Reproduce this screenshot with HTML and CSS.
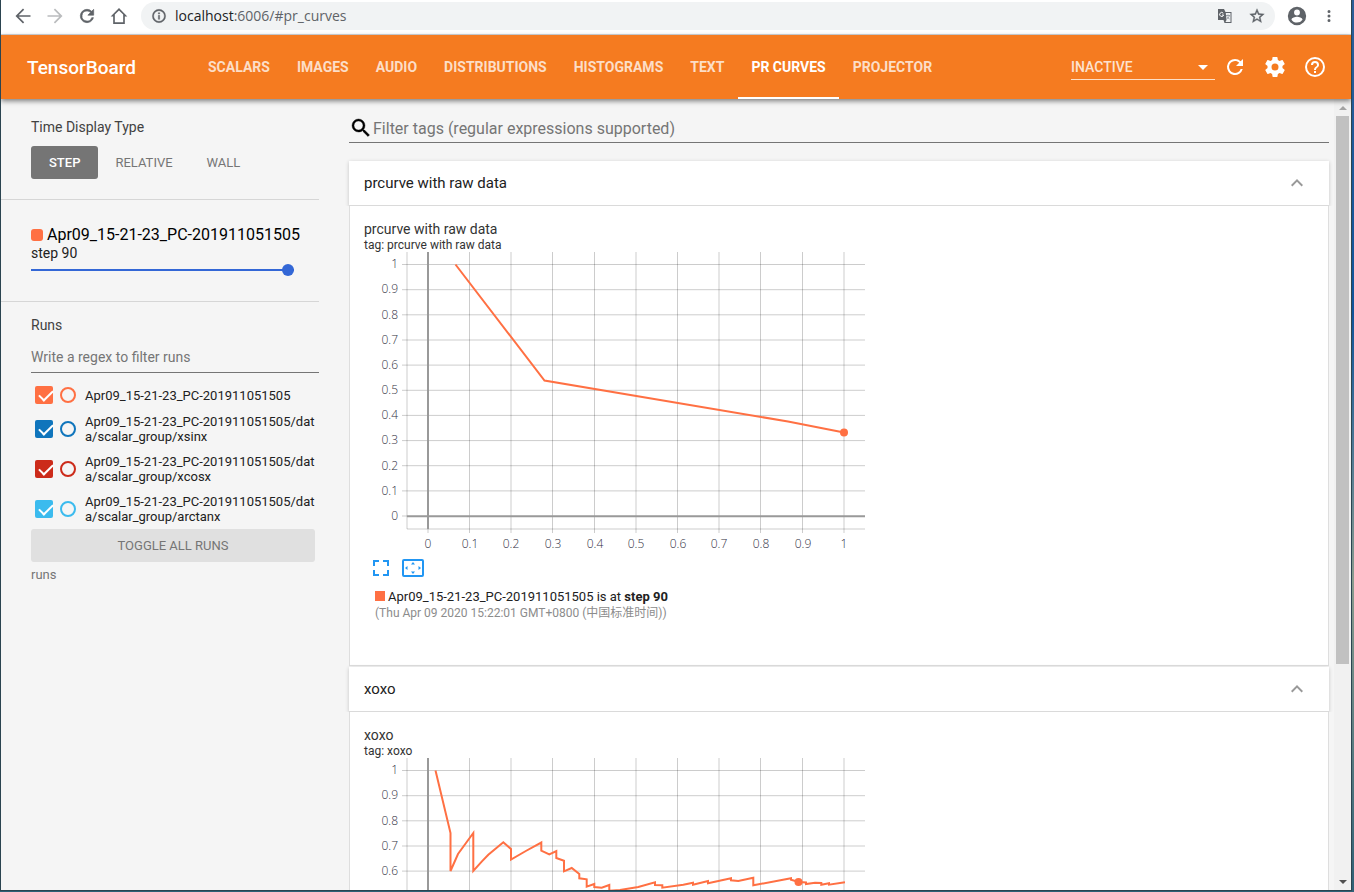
FILE: index.html
```html
<!DOCTYPE html>
<html lang="en">
<head>
<meta charset="utf-8">
<title>TensorBoard</title>
<link rel="stylesheet" href="styles.css">
</head>
<body>
<svg class="defs" aria-hidden="true">
  <symbol id="grid" viewBox="0 0 502 284">
    <path class="grid-line" d="M43 0V277M105.500 0V281M147 0V281M188.500 0V281M230.500 0V281M272 0V281M313.500 0V281M355 0V281M396.500 0V281M438.500 0V281M480 0V281"/>
    <path class="grid-line" d="M38 12.500H501M38 37.700H501M38 62.800H501M38 88H501M38 113.100H501M38 138.300H501M38 163.400H501M38 188.600H501M38 213.700H501M38 238.900H501M43 277H501M38 264H43M64 277V281"/>
    <path class="axis-line" d="M64 0V277M43 264.300H501"/>
  </symbol>
  <symbol id="chevron" viewBox="0 0 24 24"><path d="M12 8l-6 6 1.410 1.410L12 10.830l4.590 4.580L18 14z"/></symbol>
</svg>

<div class="browser-bar">
  <button class="browser-btn" aria-label="Back"><svg viewBox="0 0 24 24"><path d="M21 11H6.830l6.590-6.590L12 3l-9 9 9 9 1.410-1.410L6.830 13H21z"/></svg></button>
  <button class="browser-btn disabled" aria-label="Forward"><svg viewBox="0 0 24 24"><path d="M12 3l-1.410 1.410L17.170 11H3v2h14.170l-6.580 6.590L12 21l9-9z"/></svg></button>
  <button class="browser-btn" aria-label="Reload"><svg viewBox="0 0 24 24"><path d="M17.650 6.350A7.960 7.960 0 0 0 12 4a8 8 0 1 0 7.730 10h-2.080A6 6 0 1 1 12 6c1.660 0 3.140.69 4.220 1.780L13 11h7V4z" stroke="currentColor" stroke-width=".8"/></svg></button>
  <button class="browser-btn" aria-label="Home"><svg viewBox="0 0 24 24"><path d="M12 2.500L2 12.500H5V21.500H19V12.500H22zM7 19.500V10.300L12 5.300l5 5v9.200z"/></svg></button>
  <div class="address">
    <svg class="info" viewBox="0 0 24 24"><path d="M11 7h2v2h-2zm0 4h2v6h-2zm1-9a10 10 0 1 0 0 20 10 10 0 0 0 0-20zm0 18a8 8 0 1 1 0-16 8 8 0 0 1 0 16z" stroke="currentColor" stroke-width=".6"/></svg>
    <span class="url">localhost<span class="url-path">:6006/#pr_curves</span></span>
    <button class="browser-btn small" aria-label="Translate"><svg viewBox="0 0 16 16"><path d="M1 1h6l1.500 3H14.500V15H7.500L6.500 12H1z"/><path d="M8.800 5H13.500V14H8.500l1-2z" fill="#f1f3f4"/><path d="M9 7.500h4M11 6.500v1M12.300 7.500C12 9.500 10.500 10.500 9.500 11M10 8.500c.5 1 1.500 2 2.600 2.500" fill="none" stroke="#9aa0a6"/><path d="M6.300 5.300A2 2 0 1 0 6.600 7H5" fill="none" stroke="#fff"/></svg></button>
    <button class="browser-btn small" aria-label="Bookmark"><svg viewBox="1 1 22 22"><path d="M22 9.240l-7.190-.62L12 2 9.190 8.630 2 9.240l5.460 4.730L5.820 21 12 17.270 18.180 21l-1.630-7.030zM12 15.400l-3.760 2.270 1-4.280-3.320-2.880 4.380-.38L12 6.100l1.710 4.040 4.380.38-3.320 2.880 1 4.280z" stroke="currentColor" stroke-width=".5"/></svg></button>
  </div>
  <button class="browser-btn profile" aria-label="Profile"><svg viewBox="0 0 24 24"><path d="M12 2a10 10 0 1 0 0 20 10 10 0 0 0 0-20zm0 3a3.200 3.200 0 1 1 0 6.400A3.200 3.200 0 0 1 12 5zm0 14.200a7.200 7.200 0 0 1-6-3.220c.03-1.990 4-3.080 6-3.080s5.970 1.090 6 3.080a7.200 7.200 0 0 1-6 3.220z"/></svg></button>
  <button class="browser-btn more" aria-label="Menu"><svg viewBox="0 0 24 24"><path d="M12 8a2 2 0 1 0 0-4 2 2 0 0 0 0 4zm0 2a2 2 0 1 0 0 4 2 2 0 0 0 0-4zm0 6a2 2 0 1 0 0 4 2 2 0 0 0 0-4z"/></svg></button>
</div>

<header class="toolbar">
  <h1 class="brand">TensorBoard</h1>
  <nav class="tabs">
    <a class="tab" href="#scalars">SCALARS</a>
    <a class="tab" href="#images">IMAGES</a>
    <a class="tab" href="#audio">AUDIO</a>
    <a class="tab" href="#distributions">DISTRIBUTIONS</a>
    <a class="tab" href="#histograms">HISTOGRAMS</a>
    <a class="tab" href="#text">TEXT</a>
    <a class="tab active" href="#pr_curves">PR CURVES</a>
    <a class="tab" href="#projector">PROJECTOR</a>
  </nav>
  <div class="inactive">
    <select class="inactive-select" aria-label="Inactive dashboards"><option>INACTIVE</option></select>
    <svg class="caret" viewBox="0 0 24 24"><path d="M7 10l5 5 5-5z"/></svg>
  </div>
  <button class="tool-btn" aria-label="Reload"><svg viewBox="0 0 24 24"><path d="M17.650 6.350A7.960 7.960 0 0 0 12 4a8 8 0 1 0 7.730 10h-2.080A6 6 0 1 1 12 6c1.660 0 3.140.69 4.220 1.780L13 11h7V4z"/></svg></button>
  <button class="tool-btn" aria-label="Settings"><svg viewBox="0 0 24 24"><path d="M19.430 12.980c.04-.32.07-.64.07-.98s-.03-.66-.07-.98l2.110-1.650c.19-.15.24-.42.12-.64l-2-3.460c-.12-.22-.39-.3-.61-.22l-2.490 1c-.52-.4-1.080-.73-1.690-.98l-.38-2.650A.488.488 0 0 0 14 2h-4c-.25 0-.46.18-.49.42l-.38 2.650c-.61.25-1.170.59-1.690.98l-2.490-1c-.23-.09-.49 0-.61.22l-2 3.460c-.13.22-.07.49.12.64l2.110 1.650c-.04.32-.07.65-.07.98s.03.66.07.98l-2.110 1.650c-.19.15-.24.42-.12.64l2 3.460c.12.22.39.3.61.22l2.490-1c.52.4 1.080.73 1.690.98l.38 2.650c.03.24.24.42.49.42h4c.25 0 .46-.18.49-.42l.38-2.650c.61-.25 1.170-.59 1.690-.98l2.490 1c.23.09.49 0 .61-.22l2-3.460c.12-.22.07-.49-.12-.64zM12 15.500a3.500 3.500 0 1 1 0-7 3.500 3.500 0 0 1 0 7z"/></svg></button>
  <button class="tool-btn" aria-label="Help"><svg viewBox="0 0 24 24"><path d="M11 18h2v-2h-2zm1-16a10 10 0 1 0 0 20 10 10 0 0 0 0-20zm0 18a8 8 0 1 1 0-16 8 8 0 0 1 0 16zm0-14a4 4 0 0 0-4 4h2a2 2 0 1 1 4 0c0 2-3 1.750-3 5h2c0-2.250 3-2.500 3-5a4 4 0 0 0-4-4z"/></svg></button>
</header>

<main class="dashboard">
  <aside class="sidebar">
    <section class="panel time-panel">
      <h2 class="panel-title">Time Display Type</h2>
      <div class="time-options">
        <button class="option selected">STEP</button>
        <button class="option">RELATIVE</button>
        <button class="option">WALL</button>
      </div>
    </section>
    <section class="panel step-panel">
      <label class="run-heading" for="step"><span class="run-chip"></span>Apr09_15-21-23_PC-201911051505</label>
      <div class="step-text">step 90</div>
      <input class="step-slider" id="step" type="range" min="0" max="90" value="90">
    </section>
    <section class="panel runs-panel">
      <h2 class="panel-title">Runs</h2>
      <input class="run-filter" type="text" placeholder="Write a regex to filter runs" aria-label="Write a regex to filter runs">
      <div class="runs">
        <div class="run orange"><input class="check" id="r1" type="checkbox" checked><input class="only" type="radio" name="only" aria-label="Show only this run"><label class="run-name" for="r1">Apr09_15-21-23_PC-201911051505</label></div>
        <div class="run blue"><input class="check" id="r2" type="checkbox" checked><input class="only" type="radio" name="only" aria-label="Show only this run"><label class="run-name" for="r2">Apr09_15-21-23_PC-201911051505/data/scalar_group/xsinx</label></div>
        <div class="run red"><input class="check" id="r3" type="checkbox" checked><input class="only" type="radio" name="only" aria-label="Show only this run"><label class="run-name" for="r3">Apr09_15-21-23_PC-201911051505/data/scalar_group/xcosx</label></div>
        <div class="run cyan"><input class="check" id="r4" type="checkbox" checked><input class="only" type="radio" name="only" aria-label="Show only this run"><label class="run-name" for="r4">Apr09_15-21-23_PC-201911051505/data/scalar_group/arctanx</label></div>
      </div>
      <button class="toggle-all">TOGGLE ALL RUNS</button>
      <div class="logdir">runs</div>
    </section>
  </aside>

  <div class="content">
    <div class="tag-filter">
      <svg class="search" viewBox="0 0 24 24"><path d="M15.500 14h-.79l-.28-.27A6.470 6.470 0 0 0 16 9.500 6.500 6.500 0 1 0 9.500 16c1.610 0 3.090-.59 4.230-1.570l.27.28v.79l5 4.990L20.490 19zm-6 0a4.500 4.500 0 1 1 0-9 4.500 4.500 0 0 1 0 9z" stroke="#000" stroke-width=".4"/></svg>
      <input class="tag-input" type="text" placeholder="Filter tags (regular expressions supported)" aria-label="Filter tags">
    </div>

    <section class="category">
      <button class="category-head"><span>prcurve with raw data</span><svg class="chevron"><use href="#chevron"/></svg></button>
      <div class="category-body">
        <h3 class="chart-title">prcurve with raw data</h3>
        <div class="chart-tag">tag: prcurve with raw data</div>
        <svg class="chart" viewBox="0 0 502 302">
          <use href="#grid" width="502" height="284"/>
          <g class="y-label"><text x="34" y="16">1</text><text x="34" y="41">0.9</text><text x="34" y="67">0.8</text><text x="34" y="92">0.7</text><text x="34" y="117">0.6</text><text x="34" y="142">0.5</text><text x="34" y="167">0.4</text><text x="34" y="192">0.3</text><text x="34" y="218">0.2</text><text x="34" y="243">0.1</text><text x="34" y="268">0</text></g>
          <g class="x-label"><text x="64" y="296">0</text><text x="106" y="296">0.1</text><text x="147" y="296">0.2</text><text x="189" y="296">0.3</text><text x="231" y="296">0.4</text><text x="272" y="296">0.5</text><text x="314" y="296">0.6</text><text x="355" y="296">0.7</text><text x="397" y="296">0.8</text><text x="439" y="296">0.9</text><text x="480" y="296">1</text></g>
          <path class="curve" d="M91.500 12.500L180.500 128.500L424 169.500L480 180.500"/>
          <circle class="point" cx="480" cy="180.500" r="4"/>
        </svg>
        <div class="chart-actions">
          <button class="chart-btn" aria-label="Expand"><svg viewBox="0 0 20 18"><path d="M3 11v5h5M3 7V2h5M17 11v5h-5M17 7V2h-5" fill="none" stroke="currentColor" stroke-width="2"/></svg></button>
          <button class="chart-btn wide" aria-label="Fit domain to data"><svg viewBox="0 0 22 18"><rect x="1" y="1" width="20" height="16" rx="1" fill="none" stroke="currentColor" stroke-width="2"/><path d="M9 5.500L11 3l2 2.500zM9 12.500l2 2.500 2-2.500zM5.500 7L3 9l2.500 2zM16.500 7L19 9l-2.500 2z"/></svg></button>
        </div>
        <div class="legend">
          <div class="legend-run"><span class="legend-chip"></span>Apr09_15-21-23_PC-201911051505 is at <b>step 90</b></div>
          <div class="legend-time">(Thu Apr 09 2020 15:22:01 GMT+0800 (中国标准时间))</div>
        </div>
      </div>
    </section>

    <section class="category">
      <button class="category-head"><span>xoxo</span><svg class="chevron"><use href="#chevron"/></svg></button>
      <div class="category-body">
        <h3 class="chart-title">xoxo</h3>
        <div class="chart-tag">tag: xoxo</div>
        <svg class="chart" viewBox="0 0 502 302">
          <use href="#grid" width="502" height="284"/>
          <g class="y-label"><text x="34" y="16">1</text><text x="34" y="41">0.9</text><text x="34" y="67">0.8</text><text x="34" y="92">0.7</text><text x="34" y="117">0.6</text></g>
          <path class="curve" d="M71.500 12.500L86.500 75V113L94 96L109.300 75V113L117.700 103.700L124.300 96.700L139.300 84.300L147 91V101.500L162.700 92.500L177.300 84.500V92.700L185.300 96.300L192.300 93V100L200 102.700V113.300L207.700 110L215.300 116V120.300L222.700 121.300V128.700L230.300 126V129L237.700 129.700L245.300 127V132.700L256 132L274.300 129L291 124.300V127L298.300 127.300V129.700L319.300 126.700L329 124.700V126.700L344 123V125.300L367 120.300V122.300L374.300 123L389.300 119.700V127.300L427 120.300V121.700L434.700 124L442 124.500V126L451 124.700L457.300 125V126.700L465 125.300V126.700L481 124.300"/>
          <circle class="point" cx="434.500" cy="124" r="4"/>
        </svg>
      </div>
    </section>
  </div>

  <div class="scrollbar" aria-hidden="true"><span class="arrow up"></span><span class="thumb"></span><span class="arrow down"></span></div>
</main>
</body>
</html>
```

FILE: styles.css
```css
* { box-sizing: border-box; }

html { background: linear-gradient(#2c5f98, #10559b 35%, #8a9c8e 65%, #2f6076); }

body {
  margin: 0 2px 1px 0;
  height: calc(100vh - 1px);
  display: flex;
  flex-direction: column;
  overflow: hidden;
  font-family: Roboto, "Noto Sans CJK SC", sans-serif;
  color: #212121;
  background: #f5f5f5;
  border: solid #2b4450;
  border-width: 0 1px 1px 1px;
}

button, input, select { font-family: inherit; margin: 0; }
button { padding: 0; border: 0; background: none; }
svg { display: block; fill: currentColor; }
h1, h2, h3 { margin: 0; font-weight: 400; }
.defs { position: absolute; width: 0; height: 0; }

/* Browser chrome */
.browser-bar {
  flex: none;
  display: flex;
  align-items: center;
  height: 35px;
  padding: 0 13px 3px 12px;
  background: #fff;
  border-bottom: 1px solid #d5d8db;
  color: #5f6368;
}
.browser-btn { width: 20px; height: 20px; margin-right: 12px; color: #5f6368; }
.browser-btn svg { width: 20px; height: 20px; }
.browser-btn.disabled { color: #babcbe; }
.address {
  flex: 1;
  display: flex;
  align-items: center;
  height: 28px;
  padding: 0 10px;
  border-radius: 14px;
  background: #f1f3f4;
}
.info { width: 16px; height: 16px; margin-right: 8px; }
.url { flex: 1; font: 14px/20px "Open Sans", sans-serif; color: #202124; }
.url-path { color: #5f6368; }
.browser-btn.small { width: 16px; height: 16px; margin: 0 0 0 16px; }
.browser-btn.small svg { width: 16px; height: 16px; }
.browser-btn.profile, .browser-btn.profile svg { width: 22px; height: 22px; }
.browser-btn.profile { margin: 0 12px 0 11px; }
.browser-btn.more, .browser-btn.more svg { width: 18px; height: 18px; }
.browser-btn.more { margin: 0; }

/* Toolbar */
.toolbar {
  flex: none;
  display: flex;
  align-items: center;
  height: 64px;
  padding: 0 24px 0 26px;
  background: #f57b20;
  color: #fff;
  box-shadow: 0 2px 5px rgba(0, 0, 0, .5);
  z-index: 1;
}
.brand { width: 168px; font-size: 19px; font-weight: 500; }
.tabs { flex: 1; display: flex; gap: 1px; align-self: stretch; }
.tab {
  display: flex;
  align-items: center;
  padding: 2px 13px 0;
  border-bottom: 2px solid transparent;
  color: rgba(255, 255, 255, .76);
  font-size: 14px;
  font-weight: 700;
  text-decoration: none;
}
.tab.active { color: #fff; border-color: #fff; }
.inactive { display: flex; align-items: center; width: 144px; height: 26px; margin-right: 8px; border-bottom: 1px solid #fde0c8; }
.inactive-select {
  flex: 1;
  appearance: none;
  padding: 0;
  border: 0;
  background: none;
  color: rgba(255, 255, 255, .8);
  font-size: 14px;
  font-weight: 500;
}
.caret { width: 24px; height: 24px; }
.tool-btn { width: 24px; height: 24px; margin-left: 16px; color: #fff; }
.inactive + .tool-btn { margin-left: 0; }

/* Layout */
.dashboard { flex: 1; display: flex; min-height: 0; }
.sidebar { flex: none; width: 318px; }
.content { flex: 1; min-width: 0; padding: 15px 5px 0 30px; overflow: hidden; }

/* Sidebar */
.panel { padding-left: 30px; border-bottom: 1px solid #d6d6d6; }
.panel:last-child { border: 0; }
.panel-title { font-size: 14px; line-height: 18px; color: #424242; }
.time-panel { padding-top: 19px; padding-bottom: 20px; }
.time-options { display: flex; margin-top: 10px; }
.option { height: 33px; padding: 0 17px; border-radius: 3px; font-size: 13px; color: #757575; }
.option.selected { background: #757575; color: #fff; font-weight: 500; padding: 0 18px; }
.step-panel { padding-top: 25px; padding-bottom: 23px; }
.run-heading { display: flex; align-items: center; font-size: 16px; line-height: 19px; color: #000; }
.run-chip { width: 12px; height: 12px; margin-right: 4px; border-radius: 3px; background: #ff7043; }
.step-text { font-size: 14px; line-height: 18px; color: #212121; }
.step-slider { display: block; appearance: none; width: 263px; height: 16px; background: none; }
.step-slider::-webkit-slider-runnable-track { height: 2px; background: #3367d6; }
.step-slider::-webkit-slider-thumb { appearance: none; width: 12px; height: 12px; margin-top: -5px; border-radius: 50%; background: #3367d6; }
.runs-panel { padding-top: 14px; }
.run-filter {
  display: block;
  width: 100%;
  height: 30px;
  margin: 9px 0 13px;
  padding: 0 0 2px;
  border: 0;
  border-bottom: 1px solid #757575;
  background: none;
  font-size: 14px;
}
.run-filter::placeholder, .tag-input::placeholder { color: #757575; }
.runs { display: flex; flex-direction: column; padding: 0 2px 0 4px; gap: 10px; }
.run { display: flex; align-items: center; }
.orange { color: #ff7043; }
.blue { color: #0f75bc; }
.red { color: #cc2b1a; }
.cyan { color: #3bbbee; }
.check, .only { appearance: none; color: inherit; }
.check { width: 18px; height: 18px; border-radius: 2px; background: currentColor; }
.check::after {
  content: "";
  display: block;
  width: 6px;
  height: 12px;
  margin: 1px 0 0 7px;
  border: solid #fff;
  border-width: 0 2px 2px 0;
  transform: rotate(45deg);
}
.only { width: 16px; height: 16px; margin: 0 9px 0 7px; border: 2px solid currentColor; border-radius: 50%; }
.run-name { flex: 1; font-size: 13px; line-height: 15px; color: #212121; word-break: break-all; }
.toggle-all { display: block; width: 284px; height: 33px; margin-top: 5px; border-radius: 3px; background: #e0e0e0; color: #757575; font-size: 13px; }
.logdir { margin-top: 4px; font-size: 13px; line-height: 18px; color: #757575; }

/* Main content */
.tag-filter { display: flex; align-items: center; height: 29px; border-bottom: 1px solid #757575; margin-bottom: 18px; }
.search { width: 24px; height: 24px; color: #000; }
.tag-input { flex: 1; padding: 0; border: 0; background: none; font-size: 16px; }
.category-head {
  position: relative;
  display: flex;
  justify-content: space-between;
  align-items: center;
  width: 100%;
  height: 45px;
  padding: 0 20px 0 15px;
  border-bottom: 1px solid #dadada;
  background: #fff;
  box-shadow: 0 1px 4px rgba(0, 0, 0, .2);
  font-size: 15px;
  line-height: 20px;
  color: #212121;
  clip-path: inset(-4px -4px 0);
}
.chevron { width: 24px; height: 24px; color: #999; }
.category-body {
  min-height: 460px;
  margin-bottom: 1px;
  padding: 15px 14px;
  background: #fff;
  border: 1px solid #dedede;
  border-top: 0;
}
.chart-title { font-size: 14px; line-height: 17px; color: #333; }
.chart-tag { font-size: 12px; line-height: 14px; color: #333; }
.chart { width: 502px; height: 302px; overflow: visible; }
.grid-line { fill: none; stroke: #000; stroke-opacity: .2; }
.axis-line { fill: none; stroke: #999; stroke-width: 2; }
.chart text { font: 300 12px "Open Sans", sans-serif; fill: #32313f; }
.y-label { text-anchor: end; }
.x-label { text-anchor: middle; }
.curve { fill: none; stroke: #ff7043; stroke-width: 2; }
.point { fill: #ff7043; }
.chart-actions { display: flex; align-items: center; gap: 11px; margin: 5px 0 0 7px; }
.chart-btn { width: 20px; height: 18px; color: #2196f3; }
.chart-btn svg { width: 20px; height: 18px; }
.chart-btn.wide, .chart-btn.wide svg { width: 22px; }
.legend { padding: 12px 0 0 11px; line-height: 16px; }
.legend-run { font-size: 13px; }
.legend-chip { display: inline-block; width: 10px; height: 10px; margin-right: 3px; background: #ff7043; }
.legend-time { font-size: 12px; color: #8c8c8c; }

/* Scrollbar */
.scrollbar { flex: none; display: flex; flex-direction: column; align-items: center; width: 17px; background: #f1f1f1; padding: 7px 0 6px; }
.thumb { width: 13px; height: 70.5%; margin: 6px 0 auto; background: #c1c1c1; }
.arrow { width: 0; height: 0; border: 4px solid transparent; }
.arrow.up { border-top: 0; border-bottom-color: #a3a3a3; }
.arrow.down { border-bottom: 0; border-top-color: #505050; }
```
